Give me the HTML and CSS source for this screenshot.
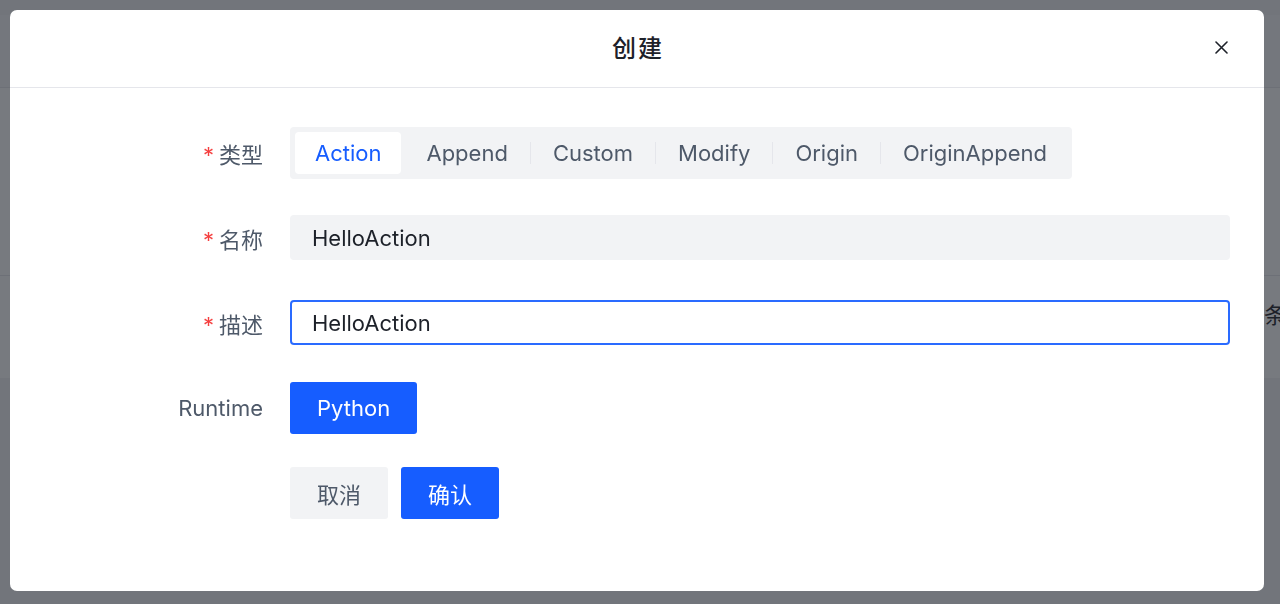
FILE: index.html
```html
<!DOCTYPE html>
<html lang="zh-CN">
<head>
<meta charset="utf-8">
<title>创建</title>
<link rel="stylesheet" href="styles.css">
</head>
<body>
<div class="page">
  <div class="page-top"></div>
  <div class="page-card">
    <div class="page-head"></div>
    <div class="page-area"></div>
    <div class="page-row"><span class="page-text">条</span></div>
  </div>
</div>
<div class="mask"></div>
<div class="modal">
  <div class="modal-header">
    <div class="modal-title">创建</div>
    <button class="modal-close" aria-label="关闭">
      <svg width="13" height="13" viewBox="0 0 13 13"><path d="M1 1L12 12M12 1L1 12" stroke="#1d2129" stroke-width="1.6" stroke-linecap="round" fill="none"/></svg>
    </button>
  </div>
  <div class="modal-body">
    <div class="form-row">
      <label class="form-label"><span class="req">*</span>类型</label>
      <div class="form-control">
        <div class="radio-group">
          <span class="radio-btn checked">Action</span>
          <span class="radio-btn">Append</span>
          <span class="radio-btn sep">Custom</span>
          <span class="radio-btn sep">Modify</span>
          <span class="radio-btn sep">Origin</span>
          <span class="radio-btn sep">OriginAppend</span>
        </div>
      </div>
    </div>
    <div class="form-row">
      <label class="form-label"><span class="req">*</span>名称</label>
      <div class="form-control">
        <div class="input">HelloAction</div>
      </div>
    </div>
    <div class="form-row">
      <label class="form-label"><span class="req">*</span>描述</label>
      <div class="form-control">
        <div class="input focused">HelloAction</div>
      </div>
    </div>
    <div class="form-row">
      <label class="form-label">Runtime</label>
      <div class="form-control">
        <div class="btn-row"><button class="btn primary">Python</button></div>
      </div>
    </div>
    <div class="form-row">
      <div class="form-label"></div>
      <div class="form-control">
        <div class="btn-row">
          <button class="btn secondary">取消</button>
          <button class="btn primary">确认</button>
        </div>
      </div>
    </div>
  </div>
</div>
</body>
</html>
```

FILE: styles.css
```css
* { box-sizing: border-box; }
html, body {
  margin: 0;
  padding: 0;
  width: 1280px;
  height: 604px;
  overflow: hidden;
  background: #f2f3f5;
  font-family: Inter, "Noto Sans CJK SC", sans-serif;
}
.page { width: 1280px; }
.page-top { height: 15px; }
.page-card { background: #fff; }
.page-head { height: 73px; background: #f7f8fa; border-bottom: 1px solid #e5e6eb; }
.page-area { height: 188px; border-bottom: 1px solid #e5e6eb; }
.page-row {
  height: 102px;
  display: flex;
  align-items: center;
  justify-content: flex-end;
  margin-right: -6px;
  font-size: 22px;
  color: #1d2129;
  font-family: "Noto Sans CJK SC", sans-serif;
}
.page-text { padding-bottom: 28px; }

.mask {
  position: fixed;
  inset: 0;
  background: rgba(29, 33, 41, 0.6);
}
.modal {
  position: fixed;
  left: 10px;
  top: 10px;
  width: 1254px;
  height: 581px;
  background: #fff;
  border-radius: 7px;
  display: flex;
  flex-direction: column;
}
.modal-header {
  height: 78px;
  flex-shrink: 0;
  border-bottom: 1px solid #e5e6eb;
  display: grid;
  grid-template-columns: 1fr auto 1fr;
  align-items: center;
  padding: 0 36px;
}
.modal-title {
  grid-column: 2;
  font-size: 24px;
  font-weight: 500;
  color: #1d2129;
  font-family: "Noto Sans CJK SC", sans-serif;
  letter-spacing: 2px;
  padding-left: 2px;
  margin-bottom: 4px;
}
.modal-close {
  grid-column: 3;
  justify-self: end;
  border: 0;
  background: none;
  padding: 0;
  width: 13px;
  height: 13px;
  display: flex;
  margin-bottom: 2px;
}
.modal-body { padding-top: 22px; }
.form-row {
  height: 85px;
  display: grid;
  grid-template-columns: 253px 1fr;
  column-gap: 27px;
  align-items: center;
  padding-right: 34px;
}
.form-label {
  text-align: right;
  font-size: 22px;
  color: #4e5969;
  font-family: Inter, "Noto Sans CJK SC", sans-serif;
}
.req {
  color: #f53f3f;
  margin-right: 5px;
  font-size: 22px;
}
.form-control { display: flex; }
.radio-group {
  display: inline-flex;
  padding: 5px;
  background: #f2f3f5;
  border-radius: 4px;
}
.radio-btn {
  position: relative;
  height: 42px;
  padding: 0 20px;
  display: flex;
  align-items: center;
  font-size: 22px;
  color: #4e5969;
  border-radius: 4px;
}
.radio-btn + .radio-btn { margin-left: 5px; }
.radio-btn.checked { background: #fff; color: #165dff; }
.radio-btn.sep::before {
  content: "";
  position: absolute;
  left: -3px;
  top: 10px;
  width: 1px;
  height: 22px;
  background: #e5e6eb;
}
.input {
  width: 100%;
  height: 45px;
  display: flex;
  align-items: center;
  padding: 0 21px;
  background: #f2f3f5;
  border: 1px solid transparent;
  border-radius: 4px;
  font-size: 22px;
  color: #1d2129;
}
.input.focused {
  background: #fff;
  border: 2px solid #2a6bff;
  padding: 0 20px;
}
.btn-row { display: flex; gap: 13px; }
.btn {
  height: 52px;
  padding: 0 27px;
  border: 0;
  border-radius: 3px;
  font-size: 22px;
  font-family: Inter, "Noto Sans CJK SC", sans-serif;
}
.btn.primary { background: #165dff; color: #fff; }
.btn.secondary { background: #f2f3f5; color: #4e5969; }
```
